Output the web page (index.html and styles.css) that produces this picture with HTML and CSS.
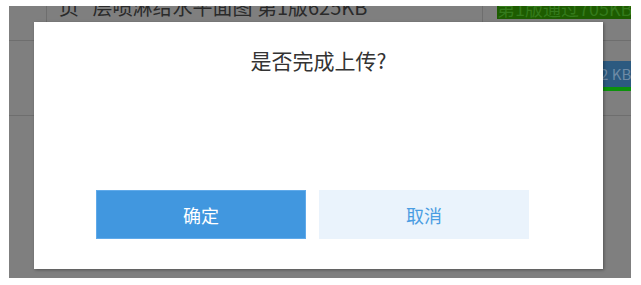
FILE: index.html
```html
<!DOCTYPE html>
<html lang="zh-CN">
<head>
  <meta charset="UTF-8" />
  <meta name="viewport" content="width=device-width, initial-scale=1.0"/>
  <title>上传</title>
  <link rel="stylesheet" href="styles.css">
</head>
<body>
  <div class="frame">
    <div class="file-table">
      <div class="row row-top">
        <div class="cell cell-index"></div>
        <div class="cell cell-name">页&nbsp;&nbsp;&nbsp;层喷淋给水平面图 第1版625KB</div>
        <div class="cell cell-status">
          <span class="tag-pass">第1版通过705KB</span>
        </div>
      </div>
      <div class="row row-mid">
        <div class="cell cell-index"></div>
        <div class="cell cell-name"></div>
        <div class="cell cell-size">
          <span class="size-box">2 KB</span>
          <span class="size-bar"></span>
        </div>
      </div>
      <div class="row row-low"></div>
    </div>

    <div class="dialog">
      <h2 class="dialog-title">是否完成上传?</h2>
      <div class="dialog-actions">
        <button class="btn btn-ok">确定</button>
        <button class="btn btn-cancel">取消</button>
      </div>
    </div>
  </div>
</body>
</html>
```

FILE: styles.css
```css
body {
    margin: 0;
    background: #fff;
    font-family: "Noto Sans CJK SC", "Noto Sans", sans-serif;
  }

  .frame {
    display: grid;
    margin: 6px 10px 0 9px;
    width: 622px;
    height: 272px;
    overflow: hidden;
    background: #7f7f7f;
  }

  .file-table, .dialog {
    grid-area: 1 / 1;
  }

  /* table behind the mask */
  .file-table {
    display: flex;
    flex-direction: column;
  }

  .row {
    display: flex;
    border-bottom: 1px solid #6e6e6e;
  }

  .cell {
    flex-shrink: 0;
    box-sizing: border-box;
  }

  .row-top {
    height: 34px;
  }

  .row-mid {
    height: 74px;
  }

  .row-low {
    border-bottom: none;
  }

  .cell-index {
    width: 38px;
    border-right: 1px solid #6e6e6e;
  }

  .row-mid .cell-index {
    border-right: none;
  }

  .cell-name {
    width: 436px;
    border-right: 1px solid #6e6e6e;
    margin-top: -12px;
    padding-left: 12px;
    font-size: 20px;
    line-height: 26px;
    color: #2a2a2a;
    white-space: nowrap;
  }

  .row-mid .cell-name {
    width: 556px;
    padding-left: 0;
    border-right: none;
  }

  .cell-status {
    padding-left: 14px;
  }

  .tag-pass {
    display: block;
    width: 140px;
    height: 13px;
    background: #1d5c00;
    color: #347a1c;
    font-size: 18px;
    line-height: 4px;
    white-space: nowrap;
    overflow: hidden;
  }

  .cell-size {
    display: flex;
    flex-direction: column;
    padding-top: 20px;
  }

  .size-box {
    display: block;
    width: 40px;
    height: 26px;
    background: #2c5a80;
    color: #6d8aa6;
    font-size: 15px;
    line-height: 26px;
    text-indent: -3px;
    overflow: hidden;
    white-space: nowrap;
  }

  .size-bar {
    display: block;
    height: 4px;
    background: #0c920c;
  }

  /* dialog */
  .dialog {
    align-self: start;
    justify-self: start;
    display: flex;
    flex-direction: column;
    margin: 16px 0 0 25px;
    width: 569px;
    height: 247px;
    background: #fff;
    box-shadow: 1px 1px 3px rgba(0, 0, 0, 0.35);
    box-sizing: border-box;
  }

  .dialog-title {
    margin: 26px 0 0;
    text-align: center;
    font-size: 21px;
    font-weight: normal;
    line-height: 24px;
    color: #333;
  }

  .dialog-actions {
    display: flex;
    gap: 13px;
    margin-top: auto;
    padding: 0 0 30px 62px;
  }

  .btn {
    width: 210px;
    height: 49px;
    border: 1px solid transparent;
    font-family: inherit;
    font-size: 18px;
    cursor: pointer;
  }

  .btn-ok {
    background: #4197df;
    border-color: #60aaea;
    color: #fff;
  }

  .btn-cancel {
    background: #eaf3fc;
    color: #4a9de2;
  }
```
